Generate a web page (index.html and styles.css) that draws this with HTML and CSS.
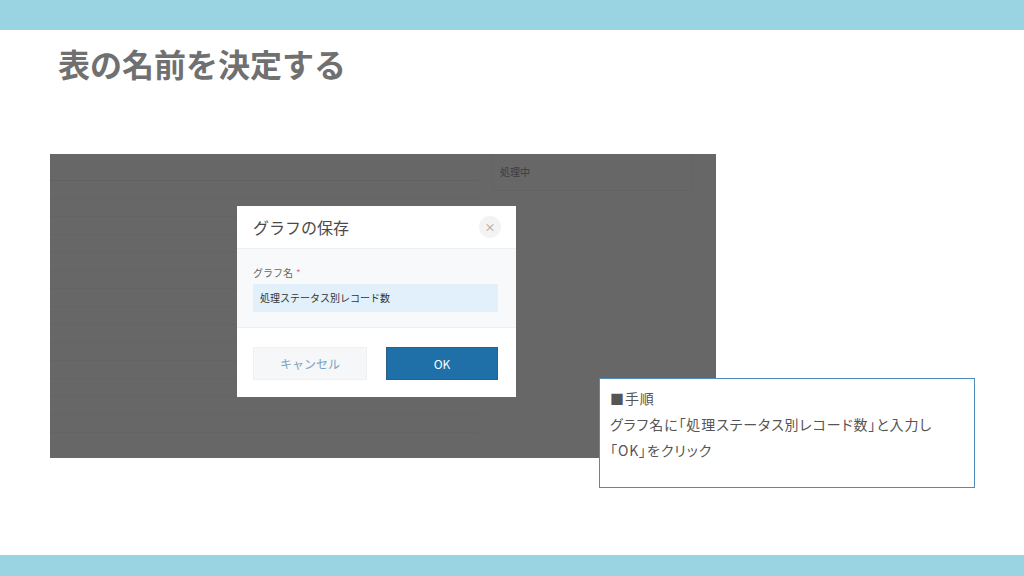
FILE: index.html
```html
<!DOCTYPE html>
<html>
<head>
<meta charset="utf-8">
<link rel="stylesheet" href="styles.css">
</head>
<body>
<div class="slide">
    <div class="topbar"></div>
    <h1 class="title">表の名前を決定する</h1>

    <div class="shot">
        <!-- the report list behind the dimmed overlay -->
        <div class="bg-table">
            <div class="bg-left">
                <div class="bg-head"></div>
                <div class="bg-row"></div><div class="bg-row"></div><div class="bg-row"></div>
                <div class="bg-row"></div><div class="bg-row"></div><div class="bg-row"></div>
                <div class="bg-row"></div><div class="bg-row"></div><div class="bg-row"></div>
                <div class="bg-row"></div><div class="bg-row"></div><div class="bg-row"></div>
                <div class="bg-row"></div><div class="bg-row"></div>
            </div>
            <div class="bg-right">
                <div class="bg-cell">処理中</div>
            </div>
        </div>

        <div class="overlay">
            <div class="dialog">
                <div class="dlg-head">
                    <span class="dlg-title">グラフの保存</span>
                    <span class="dlg-close">×</span>
                </div>
                <div class="dlg-body">
                    <div class="dlg-label">グラフ名<span class="req">*</span></div>
                    <div class="dlg-input">処理ステータス別レコード数</div>
                </div>
                <div class="dlg-foot">
                    <button class="btn-cancel">キャンセル</button>
                    <button class="btn-ok">OK</button>
                </div>
            </div>
        </div>
    </div>

    <div class="note">
        <p>■手順</p>
        <p>グラフ名に「処理ステータス別レコード数」と入力し</p>
        <p>「OK」をクリック</p>
    </div>

    <div class="bottombar"></div>
</div>
</body>
</html>
```

FILE: styles.css
```css
body {
    margin: 0;
    background: #ffffff;
    font-family: "Noto Sans CJK JP", "Noto Sans", sans-serif;
}
.slide {
    position: relative;
    width: 1024px;
    height: 576px;
    display: flex;
    flex-direction: column;
    overflow: hidden;
}
.topbar {
    height: 30px;
    background: #9ad4e2;
}
.title {
    margin: 17px 0 0 58px;
    font-size: 32px;
    line-height: 32px;
    font-weight: bold;
    color: #707070;
}

/* dimmed screenshot */
.shot {
    position: relative;
    margin: 75px 0 0 50px;
    width: 666px;
    height: 304px;
    background: #676767;
    overflow: hidden;
}
.bg-table {
    display: flex;
    height: 100%;
}
.bg-left {
    width: 428px;
}
.bg-head {
    height: 26px;
    border-bottom: 1px solid #616161;
}
.bg-row {
    height: 17px;
    border-bottom: 1px solid #646464;
}
.bg-right {
    margin-left: 14px;
    width: 201px;
}
.bg-cell {
    height: 36px;
    border-left: 1px solid #636363;
    border-right: 1px solid #636363;
    border-bottom: 1px solid #636363;
    padding-left: 7px;
    font-size: 10px;
    line-height: 36px;
    color: #3c3c3c;
}
.overlay {
    position: absolute;
    inset: 0;
    padding: 52px 0 0 187px;
}
.dialog {
    width: 279px;
    height: 191px;
    background: #ffffff;
    display: flex;
    flex-direction: column;
}
.dlg-head {
    height: 42px;
    padding: 0 15px 0 16px;
    display: flex;
    align-items: center;
    justify-content: space-between;
}
.dlg-title {
    font-size: 16px;
    color: #4a4a4a;
}
.dlg-close {
    width: 22px;
    height: 22px;
    border-radius: 50%;
    background: #f3f3f3;
    color: #9a9a9a;
    font-size: 11px;
    line-height: 22px;
    text-align: center;
}
.dlg-body {
    height: 80px;
    box-sizing: border-box;
    background: #f7f9fb;
    border-top: 1px solid #eef1f4;
    border-bottom: 1px solid #eef1f4;
    padding: 17px 18px 0 16px;
}
.dlg-label {
    font-size: 10px;
    line-height: 14px;
    color: #666666;
}
.req {
    color: #e0708a;
    margin-left: 3px;
}
.dlg-input {
    margin-top: 4px;
    height: 28px;
    background: #e2f0fb;
    padding-left: 7px;
    font-size: 10px;
    line-height: 28px;
    color: #333333;
}
.dlg-foot {
    display: flex;
    gap: 19px;
    padding: 19px 18px 0 16px;
}
.dlg-foot button {
    height: 33px;
    font-family: "Noto Sans CJK JP", "Noto Sans", sans-serif;
    font-size: 12px;
    border-radius: 0;
}
.btn-cancel {
    width: 114px;
    background: #f5f7f9;
    border: 1px solid #eef1f4;
    color: #7ba4c4;
}
.btn-ok {
    width: 112px;
    background: #1f70a8;
    border: 1px solid #2a5f86;
    color: #ffffff;
}

/* step note */
.note {
    position: absolute;
    left: 599px;
    top: 378px;
    width: 376px;
    height: 110px;
    box-sizing: border-box;
    background: #ffffff;
    border: 1px solid #4f8cb9;
    padding: 6px 0 0 10px;
}
.note p {
    margin: 0;
    font-size: 14px;
    line-height: 26px;
    letter-spacing: 0.9px;
    color: #555555;
    font-feature-settings: "palt";
}
.bottombar {
    margin-top: auto;
    height: 21px;
    background: #9ad4e2;
}
```
